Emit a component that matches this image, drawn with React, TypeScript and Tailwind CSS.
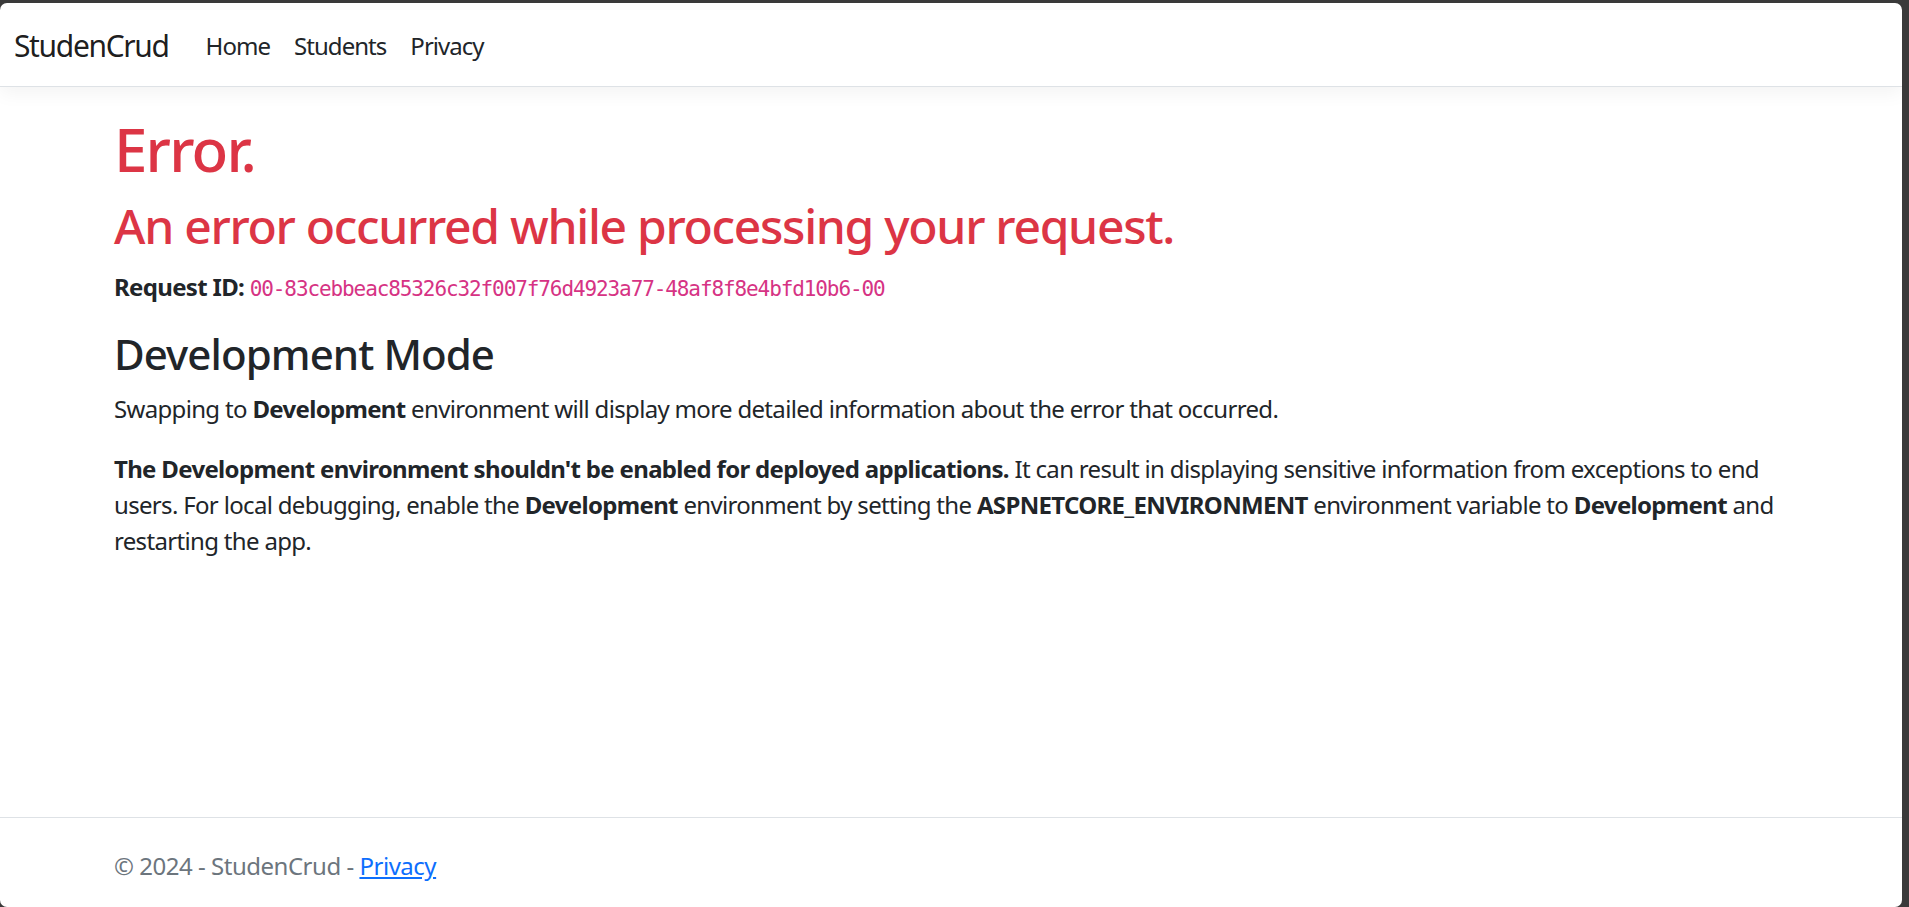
import React from "react";

export default function App() {
  const font = { fontFamily: '"Noto Sans", "Open Sans", sans-serif' };
  return (
    <div className="w-full h-[907px] bg-[#3a3a3a] pt-[3px] pr-[7px] flex overflow-hidden" style={font}>
      <div className="flex-1 bg-white rounded-[7px] overflow-hidden flex flex-col text-[#212529] font-['Noto_Sans',sans-serif] tracking-[-0.042em]">
        <nav className="h-[84px] shrink-0 border-b border-[#dee2e6] shadow-[0_6px_18px_rgba(0,0,0,0.05)] flex items-center pl-[14px] pt-[2px] relative z-10">
          <span className="text-[30px] text-[rgba(0,0,0,0.9)] mr-[25px] leading-[45px] tracking-[-0.045em]">StudenCrud</span>
          <a className="text-[24px] px-[12px] leading-[36px] text-[#212529] tracking-[-0.04em]">Home</a>
          <a className="text-[24px] px-[12px] leading-[36px] text-[#212529] tracking-[-0.04em]">Students</a>
          <a className="text-[24px] px-[12px] leading-[36px] text-[#212529] tracking-[-0.04em]">Privacy</a>
        </nav>
        <main className="flex-1 pt-[26px]">
          <div className="w-[1710px] mx-auto px-[18px]">
            <h1 className="text-[60px] leading-[72px] font-medium tracking-[-0.03em] text-[#dc3545] mb-[12px]">Error.</h1>
            <h2 className="text-[48px] leading-[57.6px] font-medium tracking-[-0.027em] text-[#dc3545] mb-[12px]">
              An error occurred while processing your request.
            </h2>
            <p className="text-[24px] leading-[36px] mb-[22px] pt-[2px]">
              <strong className="font-bold">Request ID:</strong>{" "}
              <code className="text-[21px] text-[#d63384] tracking-[-1.1px] font-['DejaVu_Sans_Mono',monospace]">
                00-83cebbeac85326c32f007f76d4923a77-48af8f8e4bfd10b6-00
              </code>
            </p>
            <h3 className="text-[42px] leading-[50.4px] font-medium tracking-[-0.022em] mb-[12px]">Development Mode</h3>
            <p className="text-[24px] leading-[36px] mb-[24px]">
              Swapping to <strong className="font-bold">Development</strong> environment will display more detailed
              information about the error that occurred.
            </p>
            <p className="text-[24px] leading-[36px] mb-[24px]">
              <strong className="font-bold">The Development environment shouldn't be enabled for deployed applications.</strong>{" "}
              It can result in displaying sensitive information from exceptions to end users. For local debugging, enable
              the <strong className="font-bold">Development</strong> environment by setting the{" "}
              <strong className="font-bold">ASPNETCORE_ENVIRONMENT</strong> environment variable to{" "}
              <strong className="font-bold">Development</strong> and restarting the app.
            </p>
          </div>
        </main>
        <footer className="h-[90px] shrink-0 border-t border-[#dee2e6] text-[#6c757d]">
          <div className="w-[1710px] mx-auto px-[18px] pt-[4px] text-[24px] leading-[88px] whitespace-nowrap tracking-[-0.02em]">
            © 2024 - StudenCrud - <a className="text-[#0d6efd] underline">Privacy</a>
          </div>
        </footer>
      </div>
    </div>
  );
}
